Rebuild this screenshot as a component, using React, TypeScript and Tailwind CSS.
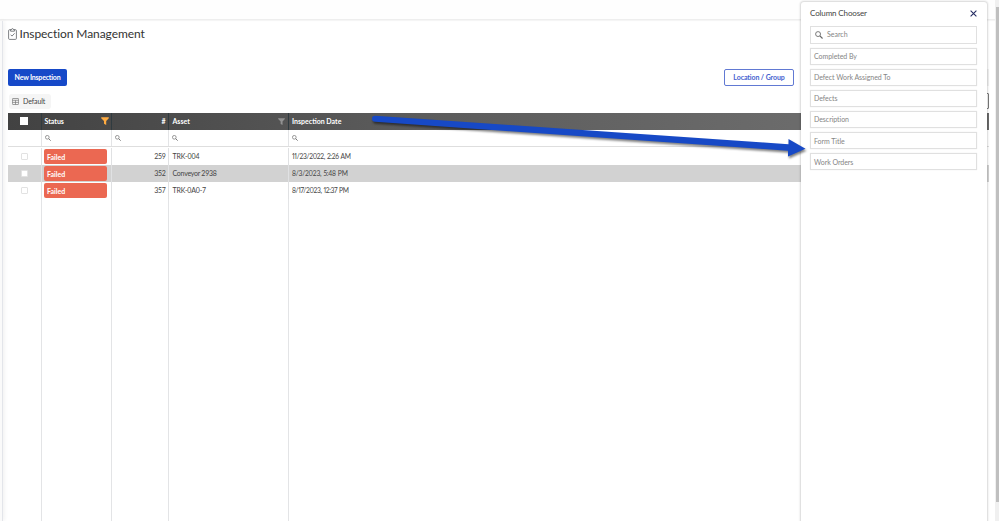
import React from "react";

const COLS = "grid grid-cols-[33.5px_70px_57px_120px_1fr]";

function Magnifier({ className }: { className: string }) {
  return (
    <svg viewBox="0 0 12 12" className={className} fill="none" stroke="currentColor" strokeWidth="1.3">
      <circle cx="4.6" cy="4.6" r="3.7" />
      <path d="M7.4 7.4L11.3 11.3" strokeWidth="1.8" />
    </svg>
  );
}

function Funnel({ className }: { className: string }) {
  return (
    <svg viewBox="0 0 8 8" className={className} fill="currentColor">
      <path d="M0.2 0.2H7.8V1.2L5.2 4V8L3 6.8V4L0.2 1.2Z" />
    </svg>
  );
}

function Clipboard() {
  return (
    <svg viewBox="0 0 9 12" className="h-3 w-[9px] shrink-0" fill="none" stroke="#5d6164" strokeWidth="0.8">
      <rect x="0.6" y="1.7" width="7.8" height="9.7" rx="1" />
      <path d="M2.6 3.2V1.6H3.5C3.6 .3 5.4 .3 5.5 1.6H6.4V3.2Z" fill="#fff" />
      <path d="M2.6 6.7L4 8.1L6.6 5.3" />
    </svg>
  );
}

function TableIcon() {
  return (
    <svg viewBox="0 0 7 7" className="h-[7px] w-[7px]" fill="none" stroke="#777" strokeWidth="0.7">
      <rect x="0.4" y="0.5" width="6.2" height="6" rx="0.6" />
      <path d="M0.4 2.3H6.6M0.4 4.4H6.6M3.5 2.3V6.5" />
    </svg>
  );
}

const rows = [
  { id: "259", asset: "TRK-004", assetCls: "tracking-[-0.13px]", date: "11/23/2022, 2:26 AM", dateCls: "tracking-[-0.3px]" },
  { id: "352", asset: "Conveyor 2938", assetCls: "tracking-[-0.26px]", date: "8/3/2023, 5:48 PM", dateCls: "tracking-[-0.2px]" },
  { id: "357", asset: "TRK-0A0-7", assetCls: "tracking-[-0.18px]", date: "8/17/2023, 12:37 PM", dateCls: "tracking-[-0.35px]" },
];

const columns = ["Completed By", "Defect Work Assigned To", "Defects", "Description", "Form Title", "Work Orders"];

function Grid() {
  return (
    <div className="flex min-h-0 flex-1 flex-col text-[7px] leading-[8px] text-[#444]">
      <div className={`${COLS} h-[17px] shrink-0 bg-gradient-to-r from-[#424242] via-[#5b5b5b] via-40% to-[#6b6b6b] to-80% pb-px font-bold text-white`}>
        <div className="-mb-px flex items-center justify-center border-r border-[#303b40] pb-px">
          <span className="h-2 w-2 bg-white" />
        </div>
        <div className="-mb-px flex items-center justify-between border-r border-[#303b40] pb-px pl-[3px] pr-[2px]">
          Status
          <Funnel className="h-[8px] w-[8px] text-[#ffab40]" />
        </div>
        <div className="-mb-px flex items-center justify-end border-r border-[#303b40] pb-px pr-[2px]">#</div>
        <div className="-mb-px flex items-center justify-between border-r border-[#303b40] pb-px pl-1 pr-[3px]">
          Asset
          <Funnel className="h-[7px] w-[7px] text-[#929292]" />
        </div>
        <div className="flex items-center pl-[3.5px]">Inspection Date</div>
      </div>
      <div className={`${COLS} h-[17px] shrink-0 border-b border-[#dedede] text-[#666]`}>
        {[0, 1, 2, 3, 4].map((c) => (
          <div key={c} className={`flex items-center pl-[3px] ${c < 4 ? "border-r border-[#e3e4e6]" : ""}`}>
            {c > 0 && <Magnifier className="h-[6px] w-[6px]" />}
          </div>
        ))}
      </div>
      <div className="h-px shrink-0" />
      {rows.map((r, i) => (
        <div key={r.id} className={`${COLS} h-[17px] shrink-0 ${i === 1 ? "bg-[#d2d2d2]" : ""}`}>
          <div className="flex items-center justify-center border-r border-[#e0e1e3] pb-px pl-px">
            <span className="h-[7px] w-[7px] rounded-[1px] border border-[#e2e2e2] bg-white" />
          </div>
          <div className="flex items-end border-r border-[#e0e1e3] pb-px pl-[2.5px] pr-[3.5px]">
            <span className="flex h-[15px] w-full items-center rounded-[2px] bg-[#eb6852] pl-[3px] font-bold text-white">
              Failed
            </span>
          </div>
          <div className="flex items-center justify-end border-r border-[#e0e1e3] pb-[2px] pr-[2px] tracking-[-0.3px]">{r.id}</div>
          <div className={`flex items-center border-r border-[#e0e1e3] pb-[2px] pl-1 ${r.assetCls}`}>{r.asset}</div>
          <div className={`flex items-center whitespace-nowrap pb-[2px] pl-[3.5px] text-[6.7px] proportional-nums [word-spacing:0.5px] ${r.dateCls}`}>{r.date}</div>
        </div>
      ))}
      <div className={`${COLS} flex-1`}>
        {[0, 1, 2, 3].map((c) => (
          <div key={c} className="border-r border-[#e3e4e6]" />
        ))}
      </div>
    </div>
  );
}

function ColumnChooser() {
  return (
    <aside className="absolute left-[801px] top-[1.5px] h-[530px] w-[186px] rounded-[3px] bg-white px-[9px] text-[#858585] shadow-[0_0_2px_1px_rgba(0,0,0,0.16)]">
      <div className="flex h-[24px] items-center justify-between pb-px pr-px text-[8px] text-[#444]">
        <span className="tracking-[-0.13px]">Column Chooser</span>
        <svg viewBox="0 0 7 7" className="h-[7px] w-[7px]" stroke="#252d63" strokeWidth="1.1">
          <path d="M0.6 0.6L6.4 6.4M6.4 0.6L0.6 6.4" />
        </svg>
      </div>
      <div className="flex h-[18px] w-[167px] items-center gap-[4px] border border-[#e0e0e0] pl-1 text-[7px]">
        <Magnifier className="h-[8px] w-[8px] text-[#666]" />
        Search
      </div>
      <div className="mt-[4px] flex w-[167px] flex-col gap-[4.2px] text-[7px]">
        {columns.map((c) => (
          <div key={c} className="flex h-[17px] items-center border border-[#e0e0e0] pl-[3px] tracking-[-0.05px] shadow-[0_0_1px_rgba(0,0,0,0.1)]">
            {c}
          </div>
        ))}
      </div>
    </aside>
  );
}

export default function App() {
  return (
    <div className="relative flex h-[521px] w-[999px] overflow-hidden bg-white font-['Lato','Open_Sans',sans-serif]">
      <div className="flex min-w-0 flex-1 flex-col">
        <div className="h-5 shrink-0 border-b border-[#eee] bg-[#fefefe] shadow-[0_1px_1px_rgba(0,0,0,0.04)]" />
        <div className="flex min-h-0 flex-1">
          <div className="mt-px w-[3px] shrink-0 border-r border-[#e3e5ea] bg-[#fafafa] shadow-[1px_0_4px_rgba(0,0,0,0.08)]" />
          <main className="flex min-w-0 flex-1 flex-col pl-[5px] pr-[6px]">
            <h1 className="mt-2 flex h-3 items-center gap-[2.5px] text-[12px] leading-3 text-[#333]">
              <Clipboard />
              <span className="whitespace-nowrap tracking-[-0.08px]">Inspection Management</span>
            </h1>
            <div className="mt-[29px] flex h-[17px] items-center justify-between">
              <button className="flex h-[17px] w-[59px] items-center justify-center whitespace-nowrap rounded-[2px] bg-[#1649c8] text-[7px] font-bold tracking-[-0.2px] text-white">
                New Inspection
              </button>
              <div className="flex gap-[188px]">
                <button className="flex h-[17px] w-[70px] items-center justify-center rounded-[2px] border border-[#6179d3] text-[7px] font-bold tracking-[-0.1px] text-[#4562cf]">
                  Location / Group
                </button>
                <span className="h-[17px] w-[7px] bg-[#f2f2f2]" />
              </div>
            </div>
            <div className="mt-[7px] flex h-4 items-center justify-between">
              <div className="ml-px flex h-[15px] w-[42px] items-center gap-1 rounded-[3px] bg-[#f5f5f5] pl-[3px] text-[7px] text-[#444]">
                <TableIcon />
                <span className="tracking-[-0.1px]">Default</span>
              </div>
              <span className="h-4 w-3 rounded-[1px] border border-[#777]" />
            </div>
            <div className="mt-[4px] flex min-h-0 flex-1 flex-col">
              <Grid />
            </div>
          </main>
        </div>
      </div>
      <div className="flex w-[4px] shrink-0 flex-col bg-[#f0f0f0] pl-px pt-[7px]">
        <div className="h-[495px] bg-[#bfbfbf]" />
      </div>
      <ColumnChooser />
      <svg className="absolute left-[360px] top-[105px] h-[65px] w-[460px] drop-shadow-[1px_2px_1px_rgba(0,0,0,0.5)]" viewBox="360 105 460 65">
        <path d="M375 115.7L788.5 144.2V139L805.5 148.8L788 156.4V150.7L375 121.8A3 3 0 0 1 375 115.7Z" fill="#1749c6" />
      </svg>
    </div>
  );
}
